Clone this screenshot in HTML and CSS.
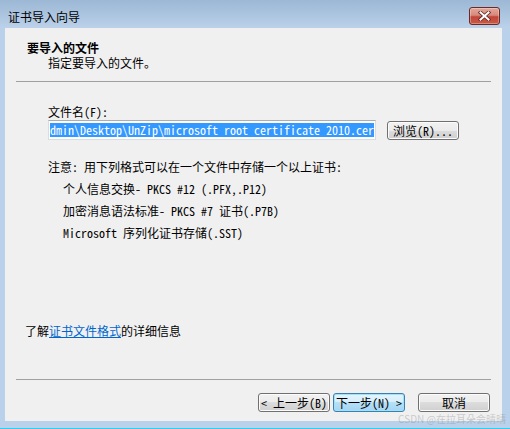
FILE: index.html
```html
<!DOCTYPE html>
<html lang="zh-CN">
<head>
<meta charset="utf-8">
<title>证书导入向导</title>
<link rel="stylesheet" href="styles.css">
</head>
<body>
<div class="window">
  <div class="titlebar">
    <span class="title">证书导入向导</span>
    <div class="close">
      <svg width="13" height="10" viewBox="0 0 13 10">
        <path d="M2.5 1.5 L10.5 8.5 M10.5 1.5 L2.5 8.5" stroke="#5a2a26" stroke-width="3.6" stroke-linecap="square" fill="none"/>
        <path d="M2.5 1.5 L10.5 8.5 M10.5 1.5 L2.5 8.5" stroke="#ffffff" stroke-width="2" stroke-linecap="square" fill="none"/>
      </svg>
    </div>
  </div>
  <div class="client">
    <div class="header">
      <div class="h-title">要导入的文件</div>
      <div class="h-sub">指定要导入的文件。</div>
    </div>
    <div class="sep"></div>
    <div class="main">
      <div class="content">
        <div class="label">文件名(F):</div>
        <div class="file-row">
          <div class="textbox"><span class="sel">dmin\Desktop\UnZip\microsoft root certificate 2010.cer</span></div>
          <div class="btn browse">浏览(R)...</div>
        </div>
        <div class="note">注意: 用下列格式可以在一个文件中存储一个以上证书:</div>
        <div class="item">个人信息交换- PKCS #12 (.PFX,.P12)</div>
        <div class="item">加密消息语法标准- PKCS #7 证书(.P7B)</div>
        <div class="item">Microsoft 序列化证书存储(.SST)</div>
      </div>
      <div class="more">了解<a class="link" href="#">证书文件格式</a>的详细信息</div>
    </div>
    <div class="sep"></div>
    <div class="footer">
      <div class="btn">&lt; 上一步(B)</div>
      <div class="btn default">下一步(N) &gt;</div>
      <div class="btn cancel">取消</div>
    </div>
  </div>
  <div class="watermark">CSDN @在拉耳朵会晴晴</div>
</div>
</body>
</html>
```

FILE: styles.css
```css
html, body {
  margin: 0;
  padding: 0;
}
body {
  width: 510px;
  height: 429px;
  overflow: hidden;
  font-family: "Noto Sans Mono CJK SC", "Noto Sans CJK SC", monospace;
  font-size: 12px;
  color: #000;
}
.window {
  position: relative;
  box-sizing: border-box;
  width: 510px;
  height: 429px;
  background: #b9d1ea;
  border-bottom: 1px solid #2cd0f0;
  display: flex;
  flex-direction: column;
}
.titlebar {
  height: 28px;
  flex: none;
  display: flex;
  justify-content: space-between;
  align-items: flex-start;
  padding: 0 10px 0 8px;
  background: linear-gradient(#9cb8d5, #b1c9e3 70%, #bcd2ea);
}
.title {
  font-family: "Noto Sans CJK SC", sans-serif;
  font-size: 12px;
  line-height: 16px;
  margin-top: 9px;
}
.close {
  box-sizing: border-box;
  width: 31px;
  height: 18px;
  margin-top: 7px;
  border: 1px solid #6b2a25;
  border-radius: 3px;
  background: linear-gradient(#e3a79a 0%, #d7897b 45%, #c4443a 55%, #c95a45 100%);
  box-shadow: inset 0 0 0 1px rgba(255, 255, 255, 0.3);
  display: flex;
  align-items: center;
  justify-content: center;
}
.close svg {
  display: block;
}
.client {
  height: 393px;
  flex: none;
  margin: 0 8px 0 5px;
  background: #f0f0f0;
  display: flex;
  flex-direction: column;
}
.header {
  padding: 12px 0 11px 22px;
}
.h-title {
  font-weight: bold;
  line-height: 15px;
}
.h-sub {
  line-height: 15px;
  padding-left: 21px;
}
.sep {
  height: 1px;
  margin: 0 11px;
  background: #a0a0a0;
  flex: none;
}
.main {
  flex: 1;
  display: flex;
  flex-direction: column;
  padding: 23px 0 41px 0;
}
.content {
  padding-left: 43px;
}
.label {
  line-height: 14px;
  margin-bottom: 1px;
}
.file-row {
  display: flex;
  align-items: flex-start;
}
.textbox {
  box-sizing: border-box;
  width: 328px;
  height: 20px;
  background: #fff;
  border: 1px solid #d6dde6;
  border-top-color: #abadb3;
  overflow: hidden;
  white-space: nowrap;
}
.sel {
  display: inline-block;
  margin: 2px 0 0 1px;
  line-height: 14px;
  background: #3399ff;
  color: #fff;
}
.btn {
  box-sizing: border-box;
  width: 72px;
  height: 19px;
  border: 1px solid #707070;
  border-radius: 3px;
  background: linear-gradient(#f2f2f2 0%, #ebebeb 50%, #dddddd 50%, #cfcfcf 100%);
  box-shadow: inset 0 0 0 1px #fbfbfb;
  text-align: center;
  line-height: 17px;
  white-space: nowrap;
}
.browse {
  margin: 1px 0 0 11px;
}
.note {
  margin-top: 16px;
  line-height: 22px;
}
.item {
  line-height: 22px;
  padding-left: 15px;
}
.more {
  margin-top: auto;
  padding-left: 20px;
  line-height: 14px;
}
.link {
  color: #0066cc;
  text-decoration: underline;
}
.footer {
  display: flex;
  justify-content: flex-end;
  padding: 13px 12px 9px 0;
}
.default {
  margin-left: 3px;
  border-color: #3c7fb1;
  background: linear-gradient(#e5f4fc 0%, #d6eefb 50%, #b5e0f8 50%, #a6d5f2 100%);
  box-shadow: inset 0 0 0 1px #9fe3fb;
}
.cancel {
  margin-left: 13px;
}
.watermark {
  position: absolute;
  right: 4px;
  bottom: 4px;
  font-family: "Noto Sans CJK SC", sans-serif;
  font-size: 10px;
  line-height: 10px;
  color: rgba(140, 140, 140, 0.4);
}
```
